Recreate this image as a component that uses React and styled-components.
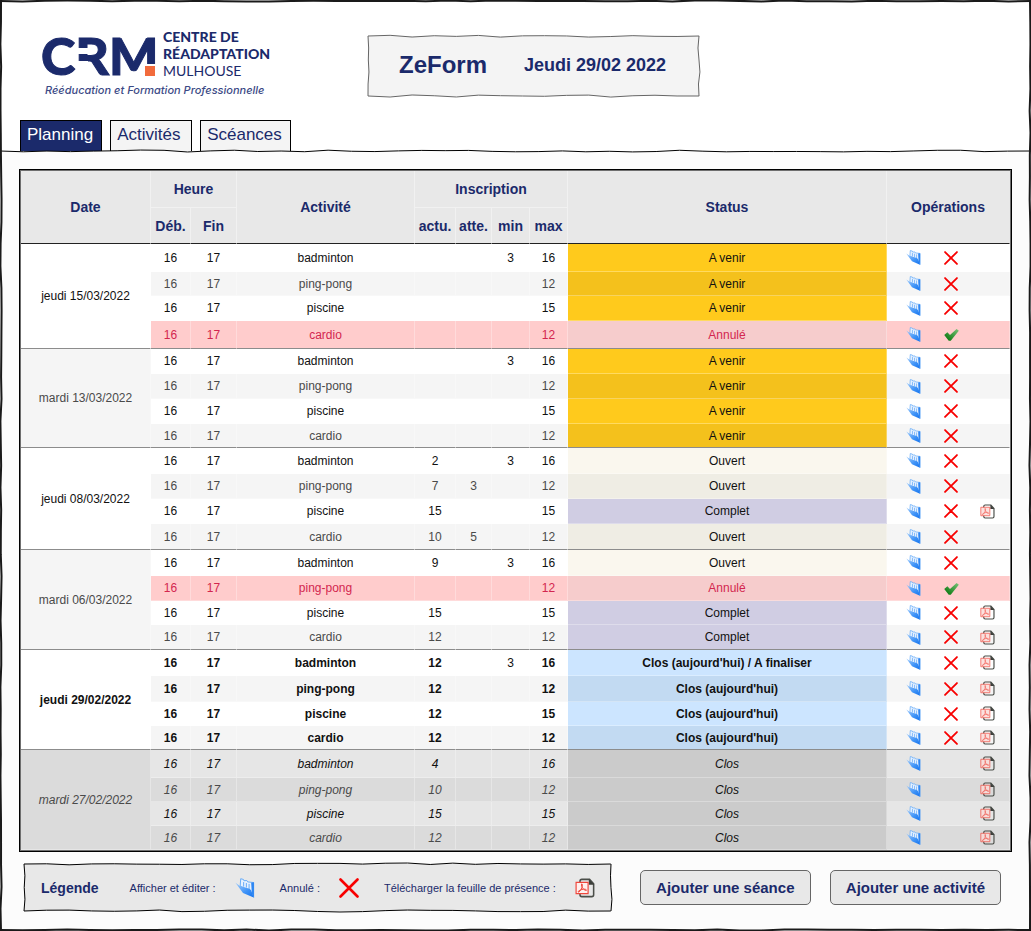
import React from "react";
import styled, { createGlobalStyle } from "styled-components";

const navy = "#1b2a6b";

const GlobalStyle = createGlobalStyle`
  * { box-sizing: border-box; }
  html, body { margin: 0; padding: 0; }
  body {
    font-family: "Liberation Sans", Arial, Helvetica, sans-serif;
    font-size: 12px;
    color: #000;
    background: #fcfcfc;
  }
`;

const GradientDefs = styled.svg`
  position: absolute;
  width: 0;
  height: 0;
`;

const Page = styled.div`
  position: relative;
  min-height: 100vh;
  overflow: hidden;
  background: #fcfcfc;
`;

const Header = styled.header`
  position: relative;
  padding-top: 28px;
  background: #fff;
`;

const Brand = styled.div`
  display: flex;
  align-items: flex-end;
  gap: 92px;
  padding: 0 42px;
`;

const LogoSvg = styled.svg`
  display: block;
  flex: none;
`;

const TitleBox = styled.div`
  position: relative;
  display: flex;
  align-items: center;
  gap: 37px;
  height: 60px;
  padding: 0 33px 2px 31px;
  background: #f4f4f4;
  color: ${navy};
  white-space: nowrap;
`;

const AppName = styled.h1`
  margin: 0;
  font-size: 24px;
  line-height: 28px;
`;

const Today = styled.p`
  margin: 0;
  font-size: 18px;
  font-weight: bold;
  line-height: 22px;
`;

const Tabs = styled.nav`
  display: flex;
  gap: 8px;
  padding: 24px 20px 0;
`;

const Tab = styled.a`
  min-width: 82px;
  height: 31px;
  padding: 0 8px 0 6px;
  border: 1px solid #000;
  border-bottom: 0;
  font-size: 17px;
  line-height: 28px;
  text-decoration: none;
  color: ${(p) => (p.$active ? "#fff" : navy)};
  background: ${(p) => (p.$active ? navy : "#f4f4f4")};
`;

const Main = styled.main`
  padding: 18px 19px 20px;
`;

const TableFrame = styled.div`
  border: 1px solid #000;
`;

const Table = styled.table`
  width: 100%;
  table-layout: fixed;
  border: 1px solid #6f6f6f;
  border-collapse: separate;
  border-spacing: 0;
  text-align: center;
`;

const HeadCell = styled.th`
  height: ${(p) => (p.rowSpan === 2 ? 73 : p.$base ? 36 : 37)}px;
  padding: 0;
  background: #e8e8e8;
  color: ${navy};
  font-size: 14px;
  line-height: 16px;
  border-right: 1px solid ${(p) => (p.$last ? "#e8e8e8" : "#f1f1f1")};
  border-bottom: 1px solid ${(p) => (p.$base ? "#222" : "#f1f1f1")};
  white-space: nowrap;
`;

const ROW = { compact: 24, regular: 25, roomy: 26, tall: 28 };

const Row = styled.tr`
  height: ${(p) => ROW[p.$size]}px;
  color: ${(p) => (p.$cancelled ? "#d3264f" : p.$dim ? "#4a4a4a" : "#111")};
  background: ${(p) => p.$bg};
`;

const groupLine = "#8c8c8c";

const Cell = styled.td`
  padding: 0;
  line-height: 14px;
  font-weight: ${(p) => (p.$bold ? "bold" : "normal")};
  font-style: ${(p) => (p.$italic ? "italic" : "normal")};
  border-right: 1px solid rgba(255, 255, 255, 0.3);
  border-bottom: 1px solid ${(p) => (p.$end ? groupLine : "rgba(255, 255, 255, 0.3)")};
`;

const DateCell = styled(Cell).attrs({ as: "th", scope: "rowgroup" })`
  background: ${(p) => p.$bg};
  color: ${(p) => (p.$dim ? "#4a4a4a" : "#111")};
`;

const StatusCell = styled(Cell)`
  background: ${(p) => p.$tone};
  color: ${(p) => (p.$cancelled ? "#d3264f" : "#111")};
`;

const Actions = styled.div`
  display: grid;
  grid-template-columns: 38px 38px 34px;
  justify-items: center;
  align-items: center;
  padding-left: 7px;
`;

const IconButton = styled.button`
  display: block;
  padding: 0;
  border: 0;
  background: none;
  cursor: pointer;
  grid-column: ${(p) => p.$slot};
  grid-row: 1;
  svg { display: block; }
`;

const Footer = styled.footer`
  display: flex;
  align-items: center;
  gap: 19px;
  padding: 12px 11px 0 5px;
`;

const Legend = styled.section`
  position: relative;
  display: flex;
  align-items: center;
  gap: 25px;
  height: 47px;
  margin-right: 10px;
  padding: 0 16px 0 17px;
  background: #e8e8e8;
  color: ${navy};
  white-space: nowrap;
`;

const LegendTitle = styled.h2`
  margin: 0 6px 0 0;
  font-size: 14px;
  line-height: 16px;
`;

const LegendItem = styled.span`
  display: flex;
  align-items: center;
  gap: 19px;
  font-size: 11px;
  line-height: 14px;
  svg { flex: none; }
`;

const AddButton = styled.button`
  flex: 1 0 auto;
  max-width: 171px;
  height: 35px;
  padding: 0 15px;
  border: 1px solid #666;
  border-radius: 5px;
  background: #e8e8e8;
  color: ${navy};
  font-family: inherit;
  font-size: 15px;
  font-weight: bold;
  line-height: 18px;
  white-space: nowrap;
  cursor: pointer;
`;

/* Hand-drawn edge laid over one side of a box */
const Edge = styled.svg`
  position: absolute;
  display: block;
  overflow: visible;
  pointer-events: none;
  fill: none;
  stroke: ${(p) => p.$color};
  stroke-width: ${(p) => p.$weight};
  ${(p) => (p.$side === "top" || p.$side === "bottom"
    ? `left: 0; width: 100%; height: 4px; ${p.$side}: -${p.$out}px;`
    : `top: 0; height: 100%; width: 4px; ${p.$side}: -${p.$out}px;`)}
`;

function wobble(seed, steps, vertical, swing) {
  let s = seed * 9301 + 49297;
  const next = () => {
    s = (s * 9301 + 49297) % 233280;
    return s / 233280;
  };
  let d = "";
  for (let i = 0; i <= steps; i += 1) {
    const along = (i / steps) * 1000;
    const off = i === 0 || i === steps ? 2 : 2 + (next() - 0.5) * 2 * swing;
    d += `${i ? "L" : "M"}${vertical ? `${off.toFixed(2)} ${along.toFixed(1)}` : `${along.toFixed(1)} ${off.toFixed(2)}`}`;
  }
  return d;
}

function Sketch({ sides, color = "#000", weight = 1, out = 2, swing = 1.2, stepsX = 30, stepsY = 6, seed = 1 }) {
  return sides.map((side, i) => {
    const vertical = side === "left" || side === "right";
    return (
      <Edge
        key={side}
        $side={side}
        $color={color}
        $weight={weight}
        $out={out}
        viewBox={vertical ? "0 0 4 1000" : "0 0 1000 4"}
        preserveAspectRatio="none"
        aria-hidden="true"
      >
        <path d={wobble(seed + i * 7, vertical ? stepsY : stepsX, vertical, swing)} vectorEffect="non-scaling-stroke" />
      </Edge>
    );
  });
}

const ALL = ["top", "right", "bottom", "left"];

function FolderIcon({ size }) {
  return (
    <svg width={size} height={size} viewBox="0 0 21 22" aria-hidden="true">
      <path d="M5.200 9 5.800.8 8.800 1.600 9.300 3 12.500 2.800 13.500 4.300 20 5V21.200L16 14z" fill="#e6f1ff" stroke="#5da7f8" strokeWidth="1" />
      <path d="M9 4.500v5M12 5.500v5M15 6.500v5.500" stroke="#5aa3f6" strokeWidth="1" fill="none" />
      <path d="M17.300 5.200 20.300 4.800V21.500L18 17z" fill="#2e86f3" />
      <path d="M0 5.300 5 8.800 15.500 11.800 17.200 13.600 20 21.500 8.300 16.600z" fill="url(#folder)" />
    </svg>
  );
}

function CrossIcon({ size }) {
  return (
    <svg width={size} height={size} viewBox="0 0 20 20" aria-hidden="true">
      <path d="M1.500 1.500 18.500 18.500M18.500 1.500 1.500 18.500" stroke="#f80000" strokeWidth="2.600" strokeLinecap="round" />
    </svg>
  );
}

function CheckIcon({ size }) {
  return (
    <svg width={size} height={size} viewBox="0 0 20 20" aria-hidden="true">
      <path d="M.3 10.500 4.500 7 8 10.500 16.800 2.500 19.800 5 9 18.300 6.300 18.300z" fill="url(#leaf)" />
    </svg>
  );
}

function PdfIcon({ size, faded }) {
  return (
    <svg width={size} height={size} viewBox="0 0 22 22" aria-hidden="true">
      <path d="M5.500 5V3.500q0-2 2-2H16L20.500 6.500V18.500q0 2-2 2h-11q-2 0-2-2V17" fill="none" stroke="#4b4e49" strokeWidth="1.700" />
      <path d="M15.200 1 21.200 7.300H15.200z" fill="#3c3f3b" />
      <g opacity={faded ? 0.8 : 1}>
        <path d="M1.200 4.800h13.200v12.400H1.200z" fill={faded ? "#fbdcd8" : "#fff0ee"} stroke="#f0473c" strokeWidth="1.300" />
        <path d="M7.300 6.500c1.300 0 .8 2.500.3 4C6.500 13.500 4.500 15.800 3.400 15.500 2.800 14.600 6.500 12.500 9.500 12.300 12.200 12.200 13 13 12.400 13.800 10.500 14.200 6.300 9.500 7.300 6.500z" fill="none" stroke="#f0473c" strokeWidth="1.100" />
      </g>
    </svg>
  );
}

function Logo() {
  return (
    <LogoSvg width="234" height="68" viewBox="0 0 234 68" role="img" aria-label="CRM Centre de Réadaptation Mulhouse">
      <text x="-1" y="47" fill={navy} stroke={navy} strokeWidth="1" fontFamily="Lato, sans-serif" fontWeight="900" fontSize="52">CRM</text>
      <path d="M34 20h12v6H34zM34 33h12v15H34z" fill="#fff" />
      <path d="M101 36h14v13h-14z" fill="#fff" />
      <path d="M103 38h10v10h-10z" fill="#f26b3c" />
      <g fill={navy} fontFamily="Lato, sans-serif" fontSize="14">
        <text x="121" y="14" fontWeight="900">CENTRE DE</text>
        <text x="121" y="31" fontWeight="900">RÉADAPTATION</text>
        <text x="121" y="48">MULHOUSE</text>
      </g>
      <text x="3" y="66" fill="#3c4a86" fontFamily="Inter, sans-serif" fontWeight="500" fontStyle="italic" fontSize="11">
        Rééducation et Formation Professionnelle
      </text>
    </LogoSvg>
  );
}

const TONES = {
  "A venir": ["#ffca1c", "#f4c11c"],
  "Annulé": ["#f6cccc", "#f6cccc"],
  "Ouvert": ["#faf7ee", "#efede4"],
  "Complet": ["#d0cde3", "#d0cde3"],
  "Clos (aujourd'hui)": ["#cce5ff", "#c2daf2"],
  "Clos (aujourd'hui) / A finaliser": ["#cce5ff", "#c2daf2"],
  "Clos": ["#cbcbcb", "#cbcbcb"],
};

// Rows: activity, actu., atte., min, max, status, PDF available, row size
const GROUPS = [
  {
    date: "jeudi 15/03/2022",
    rows: [
      ["badminton", "", "", "3", "16", "A venir", false, "tall"],
      ["ping-pong", "", "", "", "12", "A venir", false, "compact"],
      ["piscine", "", "", "", "15", "A venir", false, "regular"],
      ["cardio", "", "", "", "12", "Annulé", false, "tall"],
    ],
  },
  {
    date: "mardi 13/03/2022",
    rows: [
      ["badminton", "", "", "3", "16", "A venir", false, "regular"],
      ["ping-pong", "", "", "", "12", "A venir", false, "regular"],
      ["piscine", "", "", "", "15", "A venir", false, "regular"],
      ["cardio", "", "", "", "12", "A venir", false, "compact"],
    ],
  },
  {
    date: "jeudi 08/03/2022",
    rows: [
      ["badminton", "2", "", "3", "16", "Ouvert", false, "roomy"],
      ["ping-pong", "7", "3", "", "12", "Ouvert", false, "regular"],
      ["piscine", "15", "", "", "15", "Complet", true, "regular"],
      ["cardio", "10", "5", "", "12", "Ouvert", false, "roomy"],
    ],
  },
  {
    date: "mardi 06/03/2022",
    rows: [
      ["badminton", "9", "", "3", "16", "Ouvert", false, "roomy"],
      ["ping-pong", "", "", "", "12", "Annulé", false, "regular"],
      ["piscine", "15", "", "", "15", "Complet", true, "compact"],
      ["cardio", "12", "", "", "12", "Complet", true, "regular"],
    ],
  },
  {
    date: "jeudi 29/02/2022",
    today: true,
    rows: [
      ["badminton", "12", "", "3", "16", "Clos (aujourd'hui) / A finaliser", true, "roomy"],
      ["ping-pong", "12", "", "", "12", "Clos (aujourd'hui)", true, "roomy"],
      ["piscine", "12", "", "", "15", "Clos (aujourd'hui)", true, "compact"],
      ["cardio", "12", "", "", "12", "Clos (aujourd'hui)", true, "compact"],
    ],
  },
  {
    date: "mardi 27/02/2022",
    past: true,
    rows: [
      ["badminton", "4", "", "", "16", "Clos", true, "tall"],
      ["ping-pong", "10", "", "", "12", "Clos", true, "compact"],
      ["piscine", "15", "", "", "15", "Clos", true, "compact"],
      ["cardio", "12", "", "", "12", "Clos", true, "compact"],
    ],
  },
];

function Group({ group, index }) {
  const { date, today, past, rows } = group;
  const stripes = past ? ["#e6e6e6", "#dbdbdb"] : ["#ffffff", "#f5f5f5"];
  const lastGroup = index === GROUPS.length - 1;
  return (
    <tbody>
      {rows.map(([activity, actu, atte, min, max, status, pdf, size], i) => {
        const odd = i % 2;
        const cancelled = status === "Annulé";
        const end = i === rows.length - 1 && !lastGroup;
        const cell = { $bold: today, $italic: past, $end: end };
        return (
          <Row
            key={activity}
            $size={size}
            $cancelled={cancelled}
            $dim={odd && !today}
            $bg={cancelled ? "#ffcccc" : stripes[odd]}
          >
            {i === 0 && (
              <DateCell
                rowSpan={4}
                $bold={today}
                $italic={past}
                $end={!lastGroup}
                $dim={index % 2}
                $bg={stripes[index % 2]}
              >
                {date}
              </DateCell>
            )}
            <Cell {...cell}>16</Cell>
            <Cell {...cell}>17</Cell>
            <Cell {...cell}>{activity}</Cell>
            <Cell {...cell}>{actu}</Cell>
            <Cell {...cell}>{atte}</Cell>
            <Cell {...cell} $bold={false}>{min}</Cell>
            <Cell {...cell}>{max}</Cell>
            <StatusCell {...cell} $cancelled={cancelled} $tone={TONES[status][odd]}>
              {status}
            </StatusCell>
            <Cell {...cell}>
              <Actions>
                <IconButton type="button" $slot={1} aria-label="Afficher et éditer">
                  <FolderIcon size={15} />
                </IconButton>
                {!past && (
                  <IconButton type="button" $slot={2} aria-label={cancelled ? "Rétablir" : "Annuler"}>
                    {cancelled ? <CheckIcon size={15} /> : <CrossIcon size={14} />}
                  </IconButton>
                )}
                {pdf && (
                  <IconButton type="button" $slot={3} aria-label="Télécharger la feuille de présence">
                    <PdfIcon size={15} faded />
                  </IconButton>
                )}
              </Actions>
            </Cell>
          </Row>
        );
      })}
    </tbody>
  );
}

const Column = styled.col`
  width: ${(p) => (p.$w ? `${p.$w}px` : "auto")};
`;

export default function App() {
  return (
    <Page>
      <GlobalStyle />
      <GradientDefs aria-hidden="true">
        <defs>
          <linearGradient id="leaf" x1="0" y1="1" x2="1" y2="0">
            <stop offset="0.2" stopColor="#15801a" />
            <stop offset="1" stopColor="#7cc47a" />
          </linearGradient>
          <linearGradient id="folder" x1="0" y1="0" x2="1" y2="1">
            <stop offset="0.1" stopColor="#8fc2fc" />
            <stop offset="0.600" stopColor="#3d92f7" />
            <stop offset="1" stopColor="#1673ee" />
          </linearGradient>
        </defs>
      </GradientDefs>
      <Header>
        <Brand>
          <Logo />
          <TitleBox>
            <AppName>ZeForm</AppName>
            <Today>Jeudi 29/02 2022</Today>
            <Sketch sides={ALL} color="#666" stepsX={15} stepsY={5} seed={3} />
          </TitleBox>
        </Brand>
        <Tabs>
          <Tab href="#planning" $active aria-current="page">Planning</Tab>
          <Tab href="#activites">Activités</Tab>
          <Tab href="#sceances">Scéances</Tab>
        </Tabs>
        <Sketch sides={["bottom"]} weight={1} swing={1} stepsX={44} seed={5} />
      </Header>
      <Main>
        <TableFrame>
          <Table>
            <colgroup>
              {[130, 40, 46, 178, 41, 36, 38, 38, 0, 123].map((w, i) => (
                <Column key={i} $w={w} />
              ))}
            </colgroup>
            <thead>
              <tr>
                <HeadCell rowSpan={2} $base>Date</HeadCell>
                <HeadCell colSpan={2}>Heure</HeadCell>
                <HeadCell rowSpan={2} $base>Activité</HeadCell>
                <HeadCell colSpan={4}>Inscription</HeadCell>
                <HeadCell rowSpan={2} $base>Status</HeadCell>
                <HeadCell rowSpan={2} $base $last>Opérations</HeadCell>
              </tr>
              <tr>
                <HeadCell $base>Déb.</HeadCell>
                <HeadCell $base>Fin</HeadCell>
                <HeadCell $base>actu.</HeadCell>
                <HeadCell $base>atte.</HeadCell>
                <HeadCell $base>min</HeadCell>
                <HeadCell $base>max</HeadCell>
              </tr>
            </thead>
            {GROUPS.map((g, i) => (
              <Group key={g.date} group={g} index={i} />
            ))}
          </Table>
        </TableFrame>
        <Footer>
          <Legend aria-labelledby="legend-title">
            <LegendTitle id="legend-title">Légende</LegendTitle>
            <LegendItem>Afficher et éditer : <FolderIcon size={20} /></LegendItem>
            <LegendItem>Annulé : <CrossIcon size={20} /></LegendItem>
            <LegendItem>Télécharger la feuille de présence : <PdfIcon size={20} /></LegendItem>
            <Sketch sides={ALL} stepsX={26} stepsY={4} swing={1} seed={8} />
          </Legend>
          <AddButton type="button">Ajouter une séance</AddButton>
          <AddButton type="button">Ajouter une activité</AddButton>
        </Footer>
      </Main>
      <Sketch sides={ALL} color="#1a1a1a" weight={2} out={1} swing={0.6} stepsX={46} stepsY={42} seed={11} />
    </Page>
  );
}
